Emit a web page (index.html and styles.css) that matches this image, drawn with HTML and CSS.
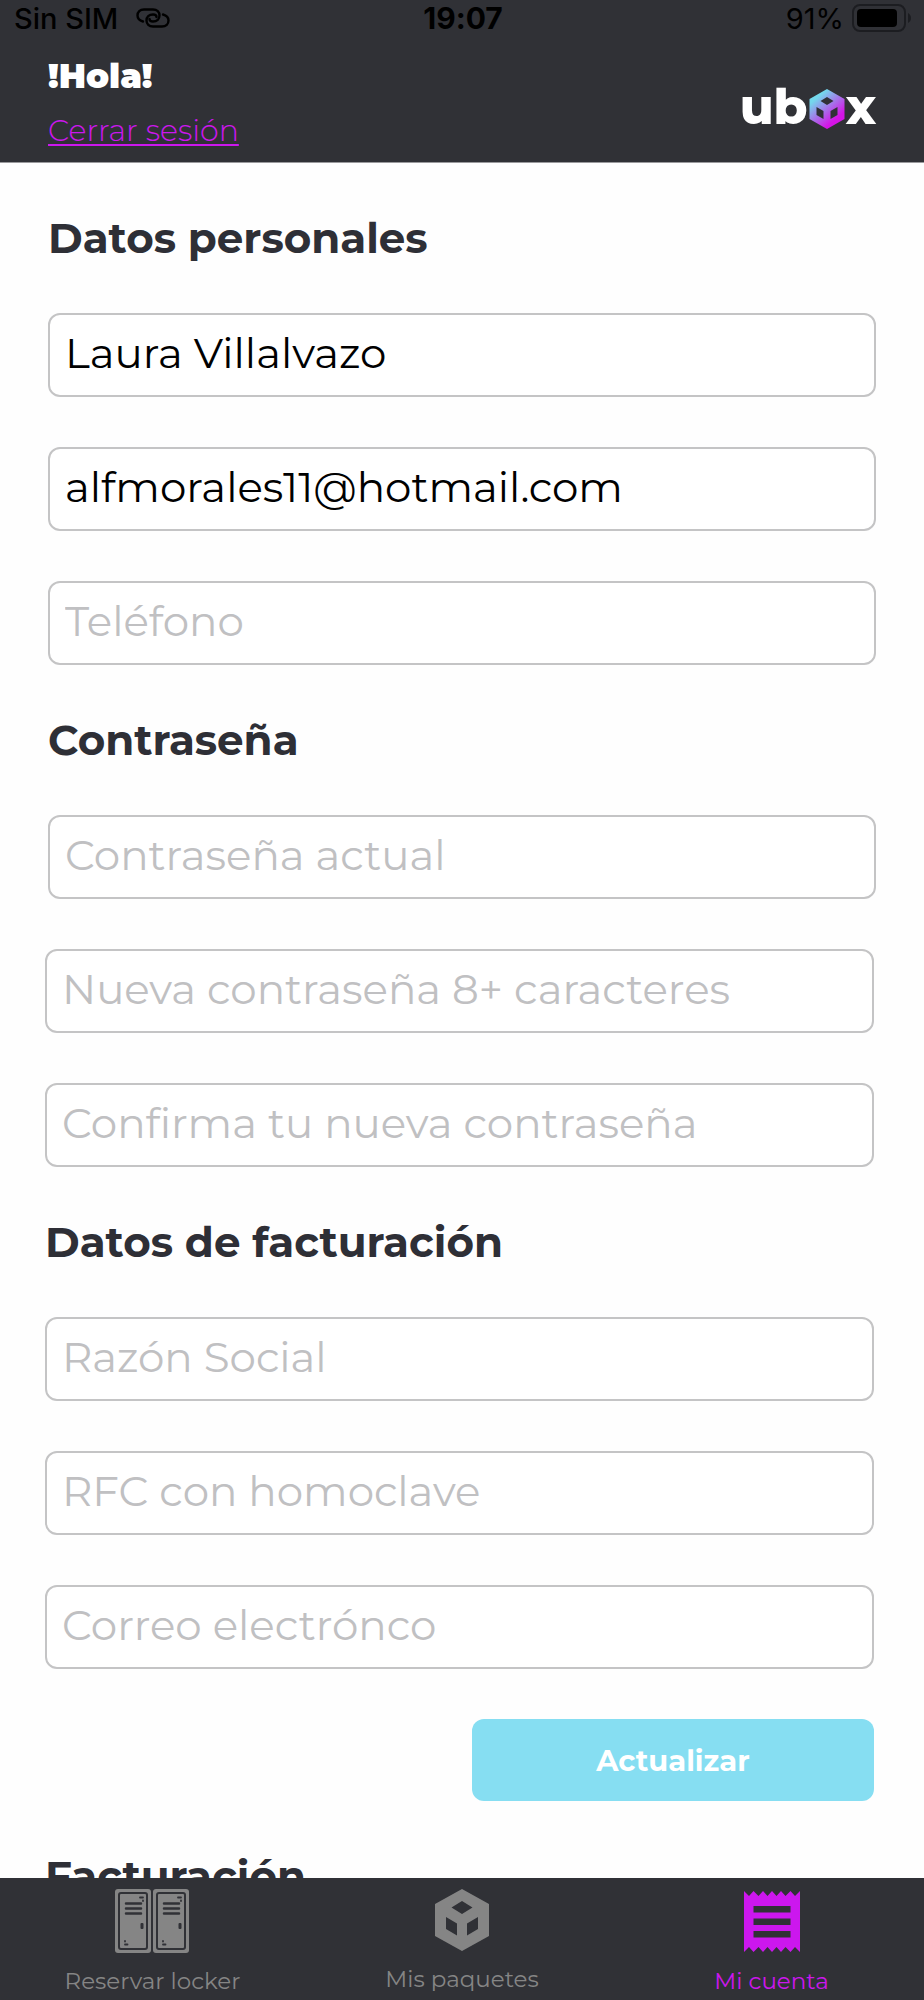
FILE: index.html
```
<!DOCTYPE html>
<html lang="es">
<head>
  <meta charset="UTF-8">
  <title>ubox - Mi cuenta</title>
  <meta name="viewport" content="width=device-width, initial-scale=1">
  <link rel="stylesheet" href="styles.css">
</head>
<body>
  <div class="app">
    <header class="header">
      <div class="status">
        <div class="status-left">
          <span>Sin SIM</span>
          <svg width="34" height="20" viewBox="0 0 34 20" fill="none" stroke="#000" stroke-width="2.4" stroke-linecap="round">
            <path d="M7 13.500C3.500 12.500 1.500 10.500 1.500 7.500C1.500 4 4 1.500 8 1.500H17C21 1.500 23.500 4 23.500 7.500C23.500 11 21 13.500 17 13.500C14.500 13.500 13.500 12 13.500 11"/>
            <path d="M27 6.500C30.500 7.500 32.500 9.500 32.500 12.500C32.500 16 30 18.500 26 18.500H17C13 18.500 10.500 16 10.500 12.500C10.500 9 13 6.500 17 6.500C19.500 6.500 20.500 8 20.500 9"/>
          </svg>
        </div>
        <span class="clock">19:07</span>
        <div class="status-right">
          <span>91%</span>
          <svg width="60" height="28" viewBox="0 0 60 28">
            <rect x="1" y="1" width="52" height="26" rx="7" fill="none" stroke="#1c1d21" stroke-width="2"/>
            <rect x="5" y="5" width="40" height="18" rx="4" fill="#000"/>
            <path d="M56 9C60 11 60 17 56 19Z" fill="#1c1d21"/>
          </svg>
        </div>
      </div>
      <div class="header-row">
        <div class="greeting">
          <strong class="hello">!Hola!</strong>
          <a class="logout" href="#">Cerrar sesión</a>
        </div>
        <div class="logo">
          <span>ub</span>
          <svg width="36" height="40" viewBox="0 0 36 40">
            <defs>
              <linearGradient id="cube" x1="0.2" y1="0.1" x2="0.8" y2="0.9">
                <stop offset="0.1" stop-color="#74d8ec"/>
                <stop offset="0.85" stop-color="#d414e6"/>
              </linearGradient>
            </defs>
            <path fill="url(#cube)" fill-rule="evenodd" d="M18 0L35.500 10V30L18 40L.5 30V10ZM18 8L11.500 12L18 16L24.500 12ZM7.500 18V26L14.500 30V22ZM28.500 18V26L21.500 30V22Z"/>
          </svg>
          <span>x</span>
        </div>
      </div>
    </header>

    <main class="content">
      <form class="form">
        <div class="group">
          <h2>Datos personales</h2>
          <input type="text" aria-label="Nombre" value="Laura Villalvazo">
          <input type="email" aria-label="Correo" value="alfmorales11@hotmail.com">
          <input type="tel" aria-label="Teléfono" placeholder="Teléfono">
          <h2>Contraseña</h2>
          <input type="password" aria-label="Contraseña actual" placeholder="Contraseña actual">
        </div>
        <div class="group group-wide">
          <input type="password" aria-label="Nueva contraseña" placeholder="Nueva contraseña 8+ caracteres">
          <input type="password" aria-label="Confirma tu nueva contraseña" placeholder="Confirma tu nueva contraseña">
          <h2>Datos de facturación</h2>
          <input type="text" aria-label="Razón Social" placeholder="Razón Social">
          <input type="text" aria-label="RFC con homoclave" placeholder="RFC con homoclave">
          <input type="email" aria-label="Correo electrónco" placeholder="Correo electrónco">
          <button type="submit">Actualizar</button>
          <h2>Facturación</h2>
        </div>
      </form>
    </main>

    <nav class="tabs">
      <a class="tab" href="#">
        <svg width="74" height="64" viewBox="0 0 74 64">
          <defs>
            <g id="locker">
              <rect width="36" height="64" rx="3" fill="#858585"/>
              <rect x="4" y="4" width="28" height="56" rx="2" fill="#858585" stroke="#303136" stroke-width="2"/>
              <path d="M11 14.500H26M11 19.500H26M11 24.500H26" stroke="#303136" stroke-width="2.500" stroke-linecap="round"/>
              <rect x="25.500" y="34" width="3" height="6" rx="1" fill="#303136"/>
              <path d="M25 8.500H28M28 11.500V12M10 55.500H12.500M10 52V52.500" stroke="#303136" stroke-width="1.800" stroke-linecap="round"/>
            </g>
          </defs>
          <use href="#locker"/>
          <use href="#locker" x="38"/>
        </svg>
        <span>Reservar locker</span>
      </a>
      <a class="tab" href="#">
        <svg width="54" height="62" viewBox="0 0 54 62">
          <path fill="#858585" fill-rule="evenodd" d="M27 0L54 15V47L27 62L0 47V15ZM27 12L16.500 18.500L27 25L37.500 18.500ZM11 28V40L22 46.500V34.500ZM43 28V40L32 46.500V34.500Z"/>
        </svg>
        <span>Mis paquetes</span>
      </a>
      <a class="tab active" href="#">
        <svg width="56" height="64" viewBox="0 0 56 64">
          <path fill="#cc17ee" fill-rule="evenodd" d="M0 2L5 7L9.500 2L14.500 7L19 2L23.500 7L28 2L32.500 7L37 2L41.500 7L46.500 2L51 7L56 2V63L51 58L46.500 63L41.500 58L37 63L32.500 58L28 63L23.500 58L19 63L14.500 58L9.500 63L5 58L0 63ZM9.500 17V23.500H46.500V17ZM9.500 29.500V36H46.500V29.500ZM9.500 42V48.500H46.500V42Z"/>
        </svg>
        <span>Mi cuenta</span>
      </a>
    </nav>
  </div>
</body>
</html>
```
FILE: styles.css
```
* {
  box-sizing: border-box;
}
body {
  margin: 0;
  background: #fefefe;
  font-family: Montserrat, Inter, sans-serif;
  font-variant-ligatures: none;
  color: #2e2f36;
}
svg {
  display: block;
  flex-shrink: 0;
}
.app {
  display: flex;
  flex-direction: column;
  height: 100vh;
}

.header {
  background: #303136;
  border-bottom: 1px solid #9a9a9d;
}
.status {
  display: grid;
  grid-template-columns: 1fr auto 1fr;
  align-items: center;
  height: 36px;
  padding: 0 12px 0 14px;
  font-family: Inter, sans-serif;
  font-size: 29px;
  color: #000;
}
.status-left,
.status-right {
  display: flex;
  align-items: center;
  gap: 8px;
}
.status-left {
  gap: 18px;
  font-weight: 500;
}
.status-right {
  justify-content: flex-end;
}
.clock {
  font-size: 30px;
  font-weight: 700;
}
.header-row {
  display: flex;
  justify-content: space-between;
  align-items: center;
  padding: 20px 48px 13px;
}
.greeting {
  display: flex;
  flex-direction: column;
  gap: 16px;
}
.hello {
  font-size: 34px;
  font-weight: 900;
  line-height: 40px;
  color: #fff;
}
.logout {
  font-size: 30px;
  font-weight: 300;
  line-height: 37px;
  color: #cc17ee;
  text-decoration-thickness: 2px;
  text-underline-offset: 3px;
}
.logo {
  display: flex;
  align-items: center;
  gap: 1px;
  padding-top: 8px;
  font-size: 49px;
  font-weight: 800;
  line-height: 50px;
  color: #fff;
}
.logo svg {
  margin-top: 4px;
}

.content {
  flex: 1;
  min-height: 0;
  overflow: hidden;
}
.form {
  display: flex;
  flex-direction: column;
  gap: 50px;
  padding-top: 50px;
}
.group {
  display: flex;
  flex-direction: column;
  gap: 50px;
  padding: 0 48px;
}
.group-wide {
  padding: 0 50px 0 45px;
}
h2 {
  margin: 0;
  font-size: 42px;
  font-weight: 700;
  line-height: 50px;
}
input {
  width: 100%;
  height: 84px;
  padding: 0 15px 4px;
  background: #fff;
  border: 2px solid #c4c4c5;
  border-radius: 12px;
  font-family: inherit;
  font-size: 42px;
  font-weight: 400;
  font-variant-ligatures: none;
  color: #000;
}
input::placeholder {
  color: #c0c0c2;
}
button {
  align-self: flex-end;
  width: 402px;
  max-width: 100%;
  height: 82px;
  background: #86def2;
  border: none;
  border-radius: 12px;
  font-family: inherit;
  font-size: 29px;
  font-weight: 700;
  color: #fff;
}

.tabs {
  display: grid;
  grid-template-columns: 33fr 34fr 33fr;
  height: 122px;
  padding-top: 11px;
  background: #303136;
}
.tab {
  display: flex;
  flex-direction: column;
  align-items: center;
  gap: 14px;
  font-size: 23px;
  line-height: 28px;
  color: #858585;
  text-decoration: none;
}
.tab.active {
  color: #cc17ee;
}
```
